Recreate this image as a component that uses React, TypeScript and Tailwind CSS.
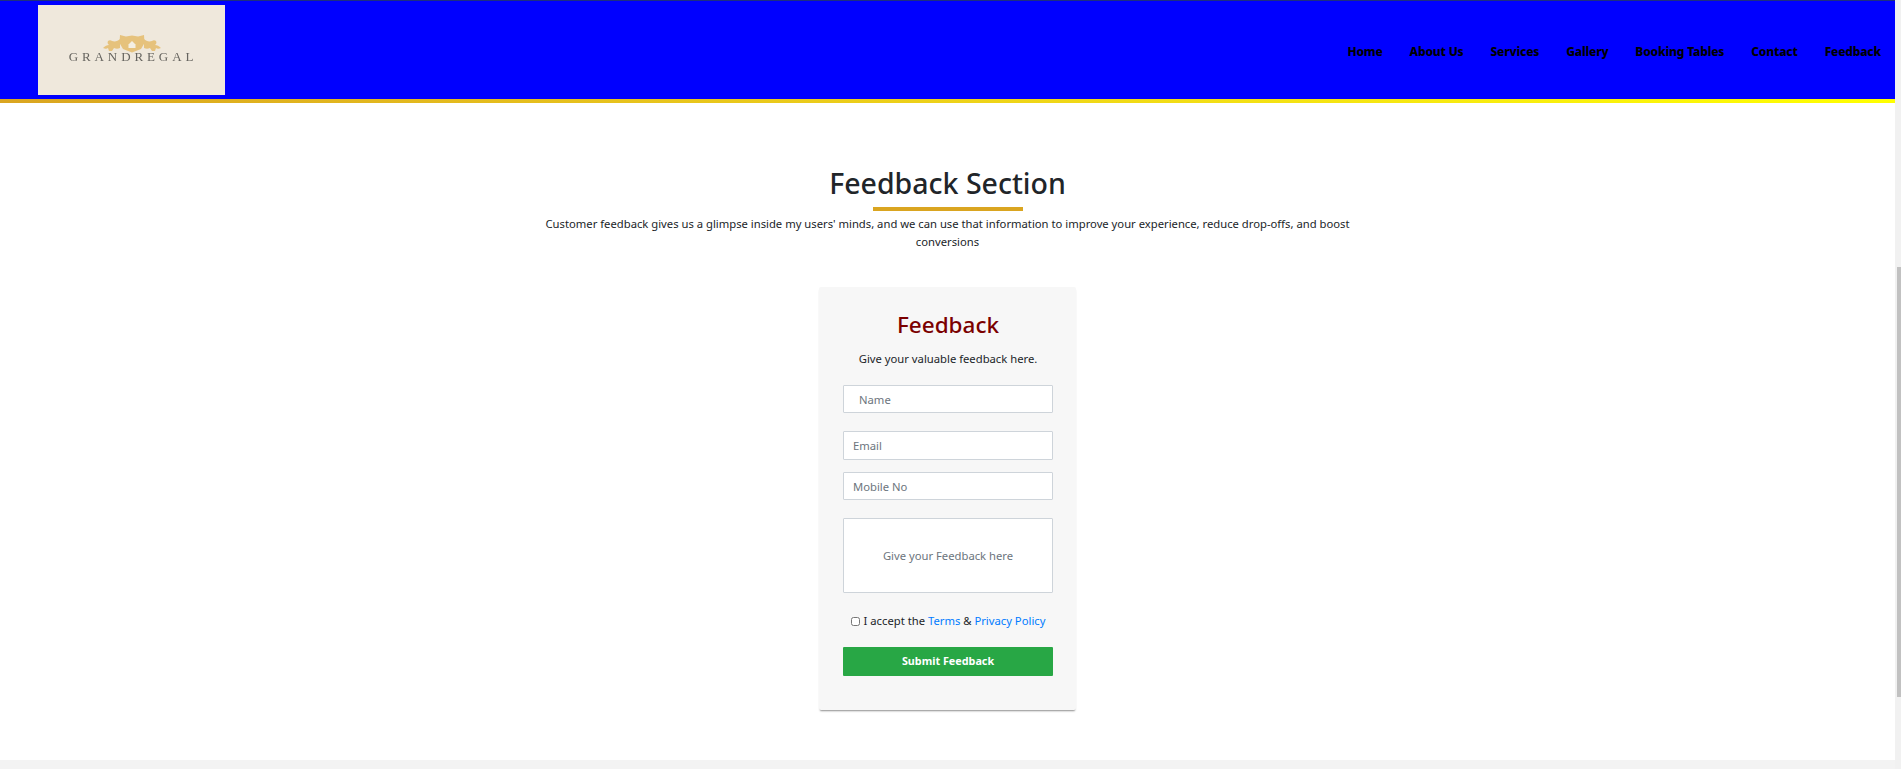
const font = "font-['Noto_Sans','Open_Sans',sans-serif]";

const navLinks = ["Home", "About Us", "Services", "Gallery", "Booking Tables", "Contact", "Feedback"];

function Logo() {
  return (
    <div className="w-[187px] h-[90px] ml-[38px] bg-[#efe8dc] flex flex-col items-center pt-[30px] overflow-hidden">
      <svg width="60" height="18" viewBox="0 0 60 18" className="blur-[0.6px]">
        <path
          d="M18 0l6 1.500 6-1 6 1 6-1.500 .5 8-3.500 6-9 3.500-9-3.500-3.500-6z"
          fill="#e6c27c"
        />
        <path d="M30 6l4 4h-8z" fill="#f4efe4" />
        <rect x="26.500" y="10" width="7" height="3" fill="#f4efe4" />
        <path
          d="M18 4c-2 2-5 3-8 2-1-1-3-1-4 0-1 2 0 3 1 4-2 0-4 1-6 3 2 1 4 1 5 0l1 3h3l2-3c2 1 4 1 6 0z"
          fill="#e6c27c"
        />
        <path
          d="M42 4c2 2 5 3 8 2 1-1 3-1 4 0 1 2 0 3-1 4 2 0 4 1 6 3-2 1-4 1-5 0l-1 3h-3l-2-3c-2 1-4 1-6 0z"
          fill="#e6c27c"
        />
      </svg>
      <div className="mt-[-3px] pl-[3px] text-[13px] leading-[14px] tracking-[3.900px] text-[#66645f] font-['Liberation_Serif',serif] whitespace-nowrap blur-[0.5px]">
        GRANDREGAL
      </div>
    </div>
  );
}

function Header() {
  return (
    <div>
      <header className="h-[99px] bg-[#0000ff] border-t border-t-[#1c2f80] flex items-center justify-between">
        <Logo />
        <nav className="flex gap-[27px] pr-[14px] pt-[3px]">
          {navLinks.map((link) => (
            <a key={link} className="text-[12px] leading-[18px] tracking-[-0.17px] font-extrabold text-black whitespace-nowrap">
              {link}
            </a>
          ))}
        </nav>
      </header>
      <div className="h-[4px] bg-gradient-to-r from-[#daa520] to-[#ffff00]" />
    </div>
  );
}

function FeedbackForm() {
  const inputClass =
    "block w-full h-[28px] bg-white border border-[#ced4da] rounded-[1px] text-[11.250px] text-[#495057] placeholder:text-[#6c757d] outline-none";
  return (
    <form className="w-[257px] h-[423px] mt-[36px] bg-[#f7f7f7] rounded-[2px] shadow-[0_2px_2px_-1px_rgba(0,0,0,0.45)] pl-[24px] pr-[23px] pt-[21px]">
      <h2 className="text-[22.500px] leading-[34px] font-medium text-[#7b0000] text-center">Feedback</h2>
      <p className="mt-[8px] text-[11.250px] leading-[18px] text-[#212529] text-center">Give your valuable feedback here.</p>
      <input className={inputClass + " mt-[17px] pl-[15px]"} placeholder="Name" />
      <input className={inputClass + " mt-[18px] h-[29px] pl-[9px]"} placeholder="Email" />
      <input className={inputClass + " mt-[12px] pl-[9px]"} placeholder="Mobile No" />
      <textarea
        className={inputClass + " mt-[18px] h-[75px] pt-[29px] text-center resize-none"}
        placeholder="Give your Feedback here"
      />
      <label className="flex items-center justify-center mt-[19px] h-[18px] text-[11.250px] leading-[18px] text-[#212529] whitespace-nowrap">
        <input type="checkbox" className="w-[9px] h-[9px] mr-[4px]" />
        <span>
          I accept the <a className="text-[#007bff]">Terms</a> &amp; <a className="text-[#007bff]">Privacy Policy</a>
        </span>
      </label>
      <button
        type="button"
        className="block w-full h-[29px] mt-[17px] bg-[#28a745] rounded-[1px] text-white text-[10.800px] font-bold"
      >
        Submit Feedback
      </button>
    </form>
  );
}

export default function App() {
  return (
    <div className={"h-[769px] overflow-hidden flex bg-white " + font}>
      <div className="flex-1 flex flex-col">
        <Header />
        <main className="flex-1 flex flex-col items-center pt-[60px]">
          <h1 className="text-[28.500px] leading-[40px] font-medium text-[#212529]">Feedback Section</h1>
          <div className="w-[150px] h-[4px] mt-[4px] bg-[#daa520]" />
          <p className="w-[830px] mt-[4px] text-[11.250px] leading-[18px] text-[#212529] text-center">
            Customer feedback gives us a glimpse inside my users' minds, and we can use that information to improve
            your experience, reduce drop-offs, and boost conversions
          </p>
          <FeedbackForm />
        </main>
        <div className="h-[9px] bg-[#f3f3f3]" />
      </div>
      <div className="w-[6px] bg-[#f1f1f1] pl-[2px] pt-[267px]">
        <div className="w-[4px] h-[430px] bg-[#c1c1c1]" />
      </div>
    </div>
  );
}
